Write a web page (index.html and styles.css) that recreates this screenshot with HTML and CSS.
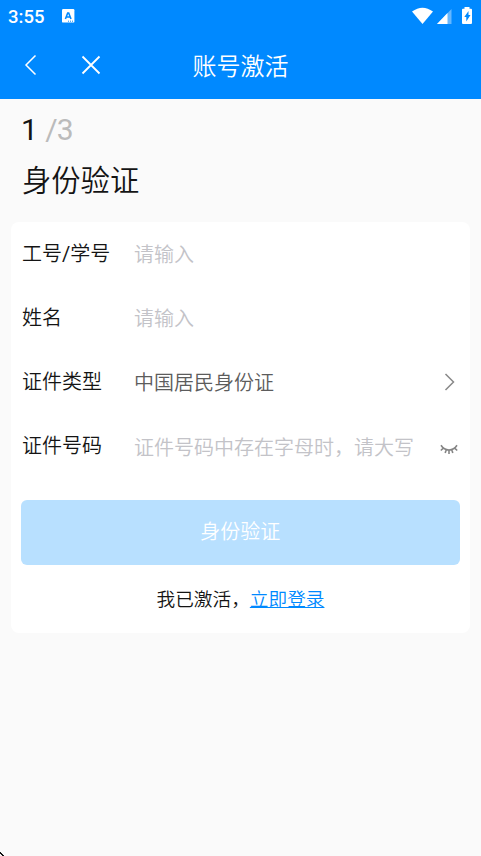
FILE: index.html
```html
<!DOCTYPE html>
<html lang="zh-CN">
<head>
<meta charset="utf-8">
<title>账号激活</title>
<link rel="stylesheet" href="styles.css">
</head>
<body>
<header class="header">
  <div class="status">
    <span class="time">3:55</span>
    <svg class="notice" width="13" height="14" viewBox="0 0 13 14"><rect width="12.4" height="13.6" rx="1.2" fill="#fff"/><path d="M3.4 10 5.7 4h1l2.300 6M4.400 8h3.600" fill="none" stroke="#0089ff" stroke-width="1.600"/><path d="M6 12.200h1m1 0h1m1 0h1" stroke="#0089ff"/></svg>
    <svg class="signals" width="62" height="20" viewBox="0 0 62 20"><path d="M0 4.500Q10.500-3.200 21 4.500L10.500 17Z" fill="#fff"/><path d="M39.500 2v15H25Z" fill="#65b7ff"/><path d="M35.500 6v11H25Z" fill="#fff"/><path d="M52.500 1.800V0h5v1.800h1.500q1 0 1 1V16q0 1-1 1h-8q-1 0-1-1V2.800q0-1 1-1Z" fill="#fff"/><path d="M56.500 4v4h2l-4.200 6.500V10h-2Z" fill="#0089ff"/></svg>
  </div>
  <div class="nav">
    <svg class="back" width="14" height="22" viewBox="0 0 14 22"><path d="M11.500 1.500 2 11l9.500 9.500" fill="none" stroke="#fff" stroke-width="1.500"/></svg>
    <svg class="close" width="20" height="20" viewBox="0 0 20 20"><path d="m1.500 1.500 17 17m0-17-17 17" stroke="#fff" stroke-width="1.800"/></svg>
    <h1 class="title">账号激活</h1>
  </div>
</header>
<main>
  <div class="step">1 <span class="total">/3</span></div>
  <h2 class="heading">身份验证</h2>
  <section class="card">
    <div class="row"><span class="label">工号<span class="slash">/</span>学号</span><span class="hint">请输入</span></div>
    <div class="row"><span class="label">姓名</span><span class="hint">请输入</span></div>
    <div class="row"><span class="label">证件类型</span><span class="value">中国居民身份证</span>
      <svg class="chevron" width="12" height="18" viewBox="0 0 12 18"><path d="m1.500 1 8 8-8 8" fill="none" stroke="#888" stroke-width="1.500"/></svg></div>
    <div class="row"><span class="label">证件号码</span><span class="hint low">证件号码中存在字母时，请大写</span>
      <svg class="eye" width="18" height="12" viewBox="0 0 18 12"><path d="M1 1.300Q4 6 9 6t8-4.700M3.300 4.200.8 6.500M6.300 5.600 5.200 9M9 6v4m2.700-4.400L12.800 9m1.900-4.800 2.500 2.300" fill="none" stroke="#858585" stroke-width="1.600"/></svg></div>
    <button class="submit">身份验证</button>
    <p class="login">我已激活，<a class="link">立即登录</a></p>
  </section>
</main>
<svg class="corner" width="4" height="4" viewBox="0 0 4 4"><path d="M0 0h1v1h1v1h1v1h1v1H2V3H1V2H0Z" fill="#111"/></svg>
</body>
</html>
```
FILE: styles.css
```css
body {
  margin: 0;
  height: 856px;
  overflow: hidden;
  position: relative;
  background: #fafafa;
  color: #141414;
  font-family: Roboto, "Noto Sans CJK SC", sans-serif;
  font-weight: 350;
}
svg { display: block; flex: none; }
.header { height: 99px; background: #0089ff; color: #fff; }
.status { height: 32px; display: flex; align-items: center; padding: 0 7px 0 8px; }
.time { font-size: 18.500px; font-weight: 500; line-height: 32px; padding-top: 2px; }
.notice { margin-left: 18px; }
.signals { margin-left: auto; margin-top: 2px; }
.nav {
  height: 67px;
  display: grid;
  grid-template-columns: 57px 110px 1fr 167px;
  align-items: center;
}
.back { margin: -1px 0 0 24px; }
.close { margin: -1px 0 0 24px; }
.title { margin: 2px 0 0; text-align: center; font-size: 24px; line-height: 34px; font-weight: inherit; }
.step { padding: 13px 22px 0 21px; font-size: 30px; line-height: 36px; font-weight: 400; }
.total { color: #bbb; letter-spacing: -.9px; }
.heading { margin: 12px 22px 0; font-size: 29.300px; line-height: 42px; font-weight: inherit; }
.card {
  margin: 20px 11px 0;
  height: 411px;
  box-sizing: border-box;
  padding: 0 10px;
  border-radius: 8px;
  background: #fff;
}
.row { display: flex; align-items: center; height: 64px; font-size: 20px; line-height: 30px; padding-left: 1px; }
.label { width: 112px; }
.slash { font-weight: 400; }
.hint { color: #c3c3c8; padding-top: 1px; }
.low { padding-top: 4px; }
.value { color: #5c5c5c; padding-top: 1px; }
.chevron { margin: 0 4px 0 auto; }
.eye { margin: 7px 2px 0 auto; }
.submit {
  display: block;
  width: 438.500px;
  height: 64.500px;
  margin: 22px 0 0 0;
  padding: 0 0 3px;
  border: 0;
  border-radius: 6px;
  background: #b8e0ff;
  color: #fff;
  font: inherit;
  font-size: 20px;
}
.login { margin: 21.500px 0 0; text-align: center; font-size: 18.667px; line-height: 28px; }
.link { color: #0089ff; text-decoration: underline; }
.corner { position: absolute; left: 0; bottom: 0; }
```
